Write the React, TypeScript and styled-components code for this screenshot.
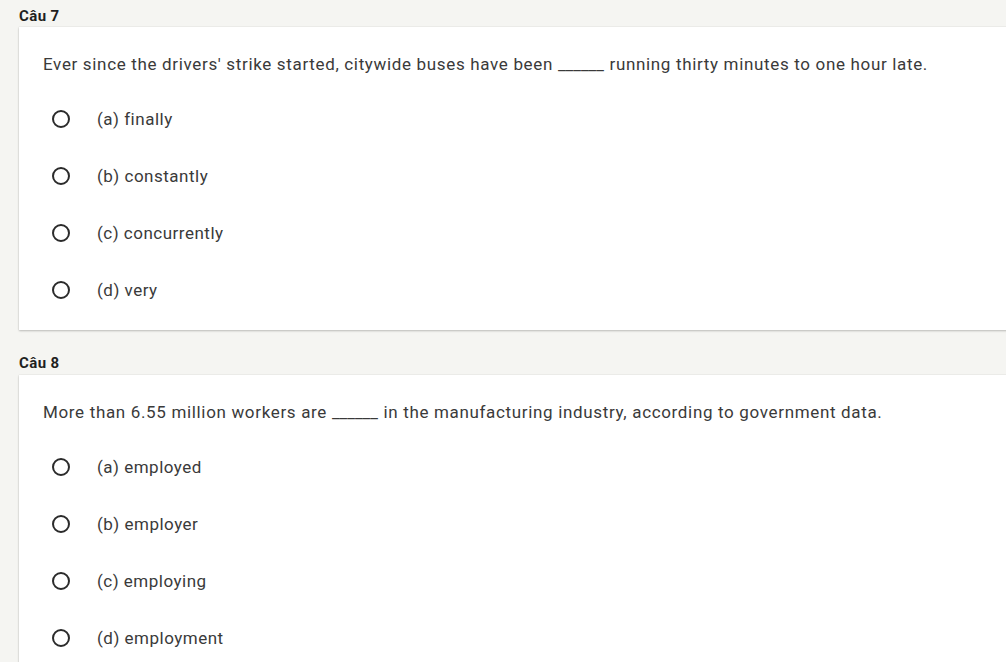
import styled, { createGlobalStyle } from 'styled-components'

const GlobalStyle = createGlobalStyle`
  html, body {
    margin: 0;
    padding: 0;
    background: #f5f5f2;
    overflow: hidden;
  }
  body {
    font-family: Roboto, "Noto Sans", Arial, sans-serif;
  }
`

interface QuestionData {
  id: number;
  before: string;
  after: string;
  options: string[];
}

const questions: QuestionData[] = [
  {
    id: 7,
    before: "Ever since the drivers' strike started, citywide buses have been",
    after: 'running thirty minutes to one hour late.',
    options: ['(a) finally', '(b) constantly', '(c) concurrently', '(d) very'],
  },
  {
    id: 8,
    before: 'More than 6.55 million workers are',
    after: 'in the manufacturing industry, according to government data.',
    options: ['(a) employed', '(b) employer', '(c) employing', '(d) employment'],
  },
]

const Page = styled.main`
  padding-left: 19px;
  width: 1040px;
`

const Section = styled.section`
  &:first-child h3 {
    padding-top: 6px;
    margin-bottom: 1px;
  }
`

const Label = styled.h3`
  margin: 0 0 2px;
  padding-top: 23px;
  font-size: 15px;
  letter-spacing: 0.4px;
  line-height: 20px;
  font-weight: 700;
  color: #1f1f1f;
`

const Card = styled.div`
  background: #fff;
  box-shadow: 0 1px 2px rgba(0, 0, 0, 0.22), 0 0 1px rgba(0, 0, 0, 0.15);
  padding: 25px 24px 12px 24px;
`

const Prompt = styled.p`
  margin: 0 0 14px;
  font-size: 17px;
  letter-spacing: 0.66px;
  line-height: 24px;
  color: #3a3a3a;
  white-space: nowrap;
`

const Blank = styled.span`
  letter-spacing: 0;
  margin-right: 0.66px;
`

const Option = styled.label`
  display: flex;
  align-items: center;
  height: 57px;
  padding-left: 9px;
  font-size: 17px;
  letter-spacing: 0.5px;
  color: #3a3a3a;
`

const Radio = styled.span`
  box-sizing: border-box;
  width: 18px;
  height: 18px;
  border: 2px solid #2b2b2b;
  border-radius: 50%;
  margin-right: 27px;
  flex-shrink: 0;
`

export default function App() {
  return (
    <Page>
      <GlobalStyle />
      {questions.map((q) => (
        <Section key={q.id}>
          <Label>Câu {q.id}</Label>
          <Card>
            <Prompt>
              {q.before} <Blank>______</Blank> {q.after}
            </Prompt>
            {q.options.map((opt) => (
              <Option key={opt}>
                <Radio />
                {opt}
              </Option>
            ))}
          </Card>
        </Section>
      ))}
    </Page>
  )
}
